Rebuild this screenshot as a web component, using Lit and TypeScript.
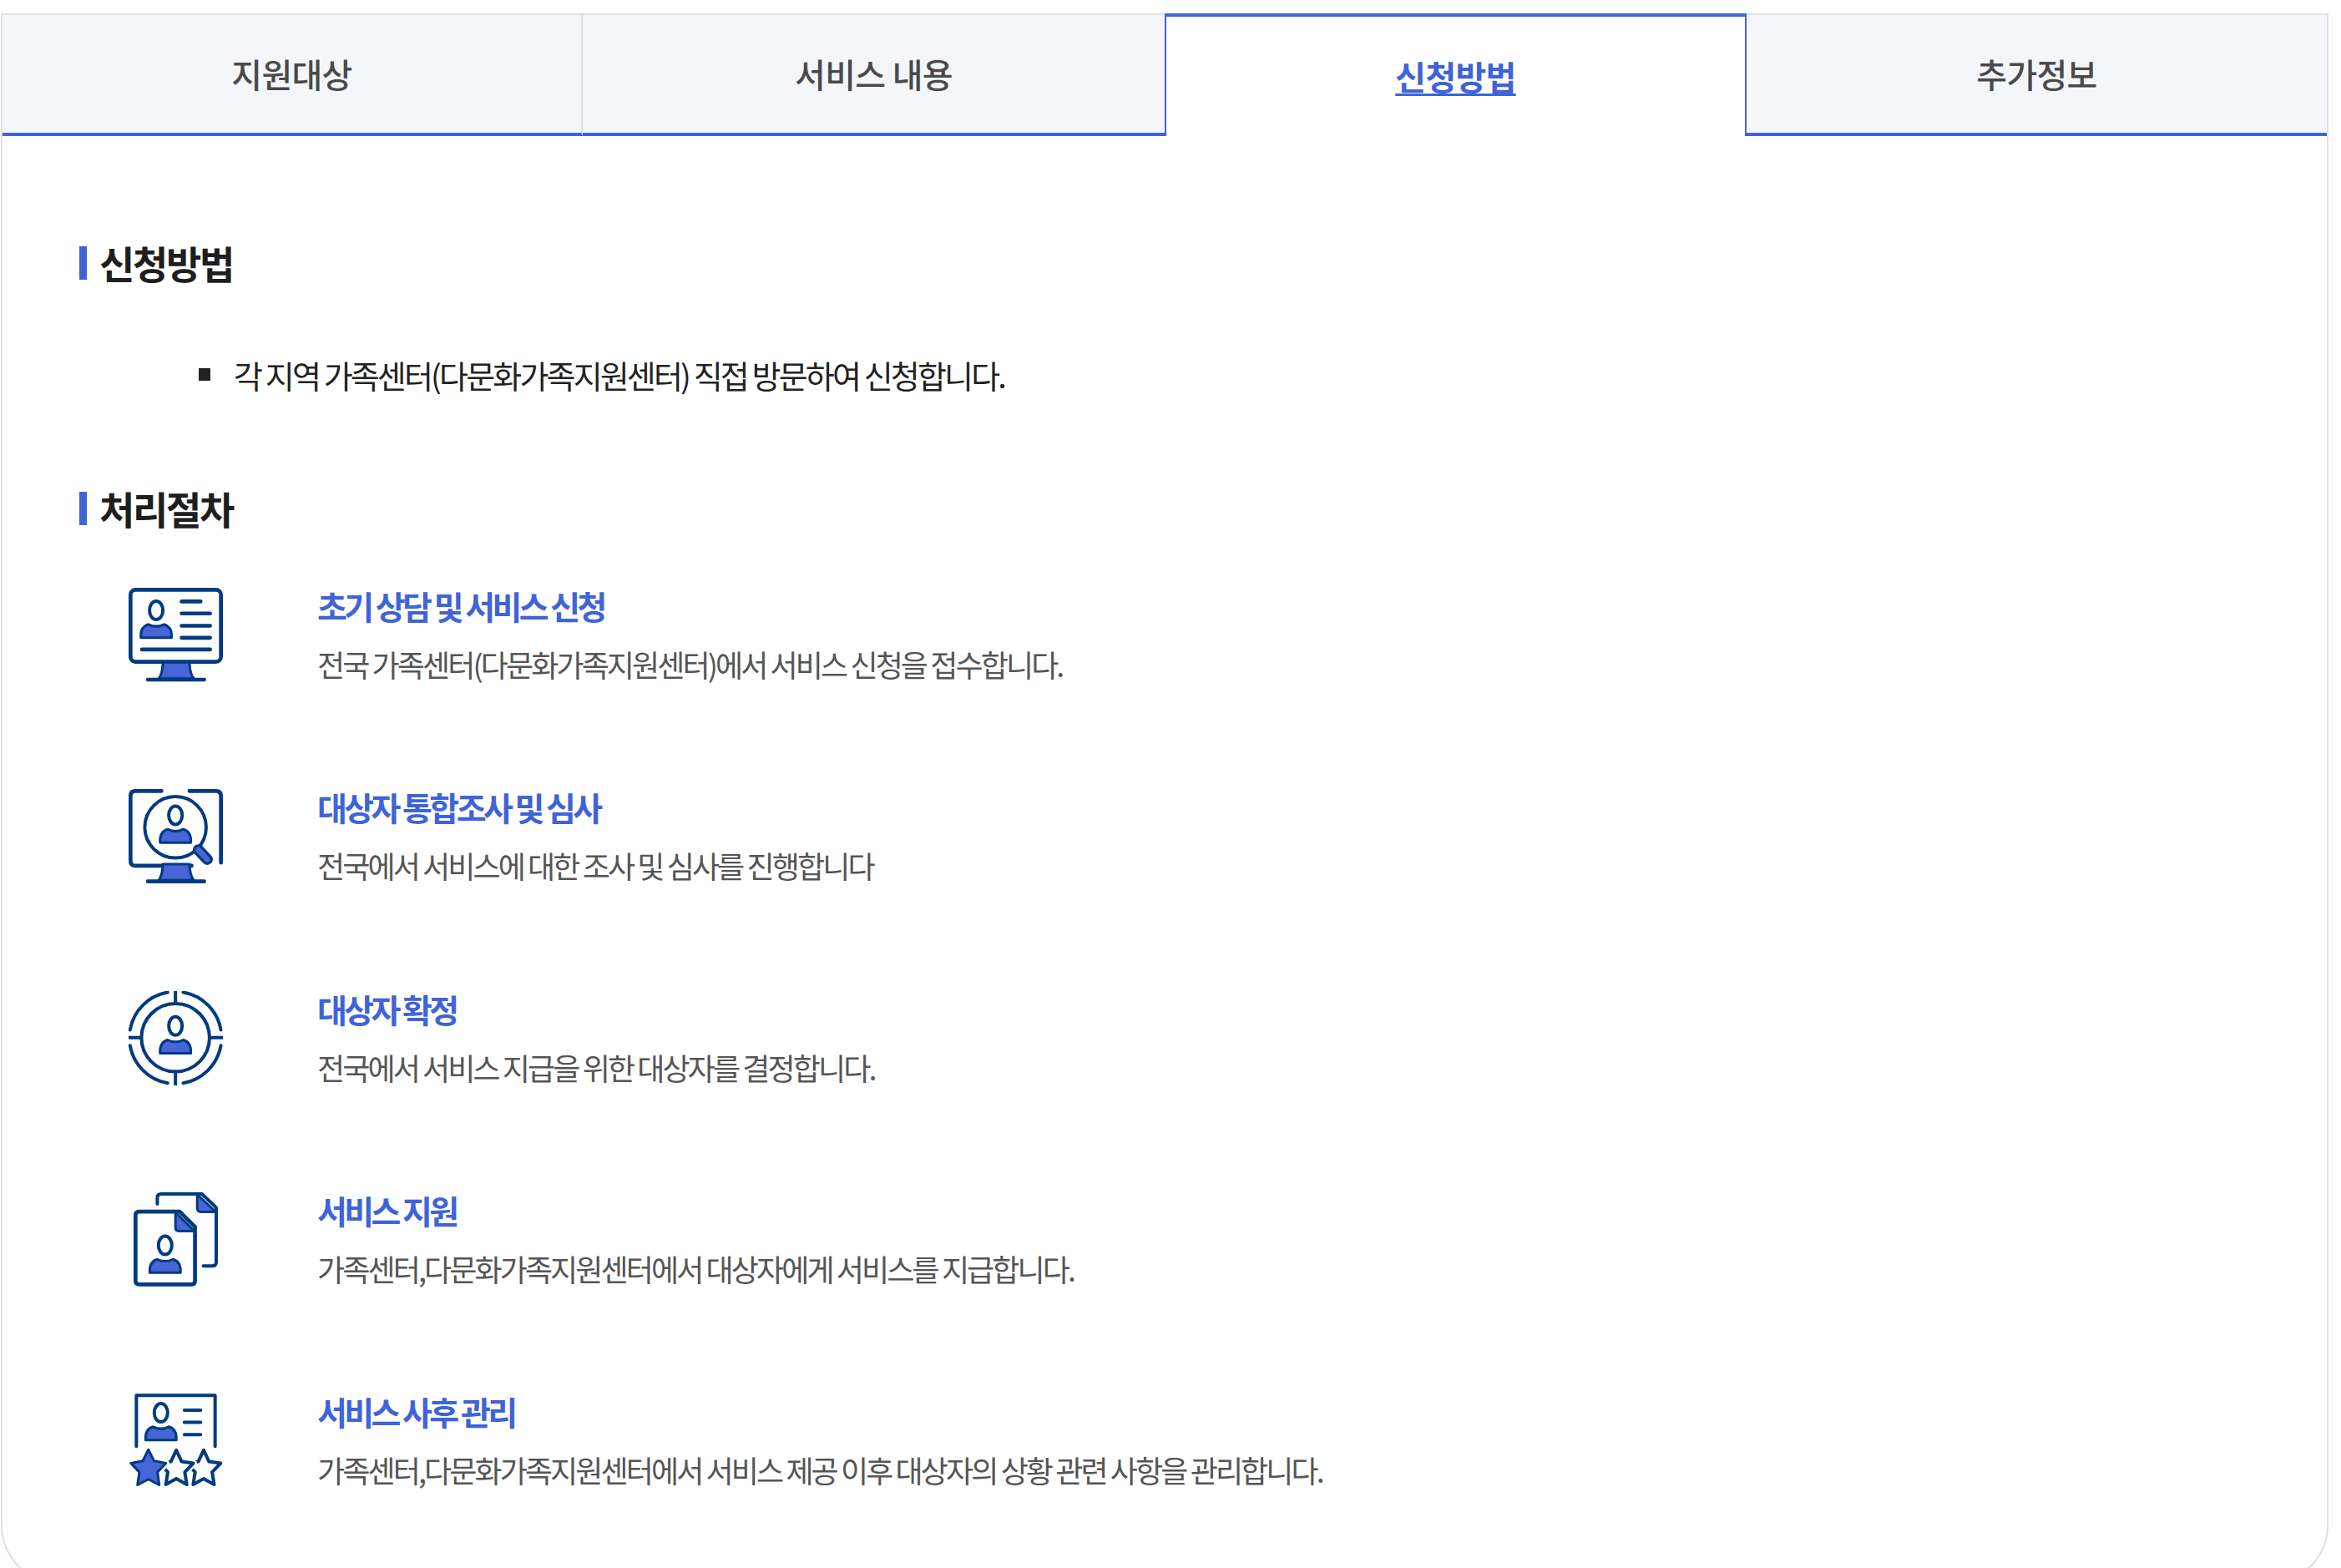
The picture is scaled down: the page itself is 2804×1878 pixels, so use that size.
import { LitElement, html, css, svg } from "lit";
import { customElement } from "lit/decorators.js";

const star = (cx: number, cy: number, Rx: number, Ry: number, k: number) => {
  const pts: string[] = [];
  for (let i = 0; i < 10; i++) {
    const a = -Math.PI / 2 + (i * Math.PI) / 5;
    const q = i % 2 ? k : 1;
    pts.push(`${(cx + Rx * q * Math.cos(a)).toFixed(1)},${(cy + Ry * q * Math.sin(a)).toFixed(1)}`);
  }
  return pts.join(" ");
};

const person = (cx: number, top: number) => svg`
  <ellipse class="thin" cx=${cx} cy=${top + 36} rx="24" ry="33"></ellipse>
  <path class="fill" d="M${cx - 55} ${top + 134} Q${cx - 58} ${top + 95} ${cx - 28} ${top + 86} Q${cx} ${top + 100} ${cx + 28} ${top + 86} Q${cx + 58} ${top + 95} ${cx + 55} ${top + 134} Z"></path>`;

const stand = (y: number) => svg`
  <path class="fill" d="M195 ${y} H290 Q292 ${y + 44} 306 ${y + 58} H180 Q193 ${y + 44} 195 ${y} Z"></path>
  <path class="line" d="M141 ${y + 62} H343"></path>`;

const icons = [
  svg`<svg viewBox="72 75 338 338">
    <rect class="line" x="79" y="82" width="324" height="258" rx="18"></rect>
    ${stand(342)}
    ${person(171, 120)}
    <path class="line" d="M262 124 H330 M262 167 H364 M262 211 H364 M262 254 H364 M120 296 H364"></path>
  </svg>`,
  svg`<svg viewBox="72 798 338 338">
    <path class="line" d="M190 805 H97 Q79 805 79 823 V1055 Q79 1073 97 1073 H298 M290 805 H385 Q403 805 403 823 V1062" stroke-linecap="butt"></path>
    <circle class="thin" cx="240" cy="935" r="110"></circle>
    <path class="line" d="M322 1016 L354 1050" style="stroke-width:40"></path>
    <path d="M322 1016 L354 1050" fill="none" stroke="#4764d8" stroke-width="20" stroke-linecap="round"></path>
    ${person(240, 856)}
    ${stand(1067)}
  </svg>`,
  svg`<svg viewBox="72 85 338 338">
    <circle class="thin" cx="240" cy="252" r="122"></circle>
    <path class="thin" d="M240 85 V130 M240 374 V420 M72 252 H118 M362 252 H410"></path>
    <path class="thin" d="M268 89.4 A165 165 0 0 1 402.6 224 M402.6 280 A165 165 0 0 1 268 414.6 M212 414.6 A165 165 0 0 1 77.4 280 M77.4 224 A165 165 0 0 1 212 89.4"></path>
    ${person(240, 174)}
  </svg>`,
  svg`<svg viewBox="72 58 338 338">
    <path class="line" style="stroke-width:12" d="M175 100 V78 Q175 64 189 64 H335 L386 113 V308 Q386 322 372 322 H340"></path>
    <path class="fill" d="M318 66 V114 Q318 128 332 128 H384 Z"></path>
    <path class="line" d="M255 127 H110 Q97 127 97 140 V376 Q97 388 110 388 H298 Q310 388 310 376 V182 Z"></path>
    <path class="fill" d="M240 130 V184 Q240 197 253 197 H308 Z"></path>
    ${person(203, 212)}
  </svg>`,
  svg`<svg viewBox="72 783 338 338">
    <path class="line" style="stroke-width:12" d="M100 972 V790 H382 V972"></path>
    ${person(188, 816)}
    <path class="line" style="stroke-width:12" d="M272 843 H330 M272 886 H330 M272 930 H330"></path>
    <polygon class="thin" points=${star(341, 1054, 64, 68, 0.5)}></polygon>
    <polygon class="halo" points=${star(243, 1054, 64, 68, 0.5)}></polygon>
    <polygon class="thin" points=${star(243, 1054, 64, 68, 0.5)}></polygon>
    <polygon class="halo" points=${star(143, 1054, 66, 70, 0.52)}></polygon>
    <polygon class="fill" stroke-width="13" points=${star(143, 1054, 66, 70, 0.52)}></polygon>
  </svg>`,
];

const steps = [
  ["초기 상담 및 서비스 신청", "전국 가족센터(다문화가족지원센터)에서 서비스 신청을 접수합니다."],
  ["대상자 통합조사 및 심사", "전국에서 서비스에 대한 조사 및 심사를 진행합니다"],
  ["대상자 확정", "전국에서 서비스 지급을 위한 대상자를 결정합니다."],
  ["서비스 지원", "가족센터,다문화가족지원센터에서 대상자에게 서비스를 지급합니다."],
  ["서비스 사후 관리", "가족센터,다문화가족지원센터에서 서비스 제공 이후 대상자의 상황 관련 사항을 관리합니다."],
];

const tabs = ["지원대상", "서비스 내용", "신청방법", "추가정보"];

@customElement("app-root")
export class AppRoot extends LitElement {
  static styles = css`
    :host {
      display: block;
      height: 1878px;
      overflow: hidden;
      padding: 16px 15px 0 1px;
      box-sizing: border-box;
      background: #fff;
      font-family: "Noto Sans CJK KR", "Noto Sans", sans-serif;
    }
    .panel {
      height: 1881px;
      box-sizing: border-box;
      border: 2px solid #e0e0e0;
      border-top: 0;
      border-radius: 0 0 70px 70px;
    }
    .tabs {
      display: grid;
      grid-template-columns: 695px 697px 697px 1fr;
      height: 147px;
    }
    .tab {
      display: flex;
      align-items: center;
      justify-content: center;
      box-sizing: border-box;
      padding-bottom: 2px;
      background: #f5f6fa;
      border-top: 2px solid #e0e0e0;
      border-right: 2px solid #dcdde2;
      border-bottom: 4px solid #3f63d9;
      font-size: 40px;
      font-weight: 500;
      letter-spacing: -0.7px;
      color: #4a4a4a;
    }
    .tab:nth-child(2), .tab:last-child {
      border-right: 0;
    }
    .tab.active {
      background: #fff;
      border: 2px solid #3f63d9;
      border-top-width: 4px;
      border-bottom: 0;
      color: #3f63d9;
      font-weight: 700;
      text-decoration: underline;
      text-decoration-thickness: 3px;
      text-underline-offset: 4px;
    }
    .body {
      padding: 132px 0 0 92px;
    }
    h2 {
      display: flex;
      align-items: center;
      gap: 15px;
      margin: 0;
      height: 40px;
      font-size: 46px;
      font-weight: 700;
      letter-spacing: -2.3px;
      color: #1e1e1e;
    }
    h2::before {
      content: "";
      width: 9px;
      height: 40px;
      background: #3f63d9;
    }
    h2 span {
      margin-top: -3px;
    }
    .note {
      display: flex;
      align-items: center;
      gap: 28px;
      margin: 93px 0 0 143px;
      height: 40px;
      font-size: 38px;
      letter-spacing: -2.85px;
      color: #222;
    }
    .note::before {
      content: "";
      width: 14px;
      height: 15px;
      background: #222;
    }
    .second {
      margin-top: 121px;
    }
    .steps {
      margin: 75px 0 0 59px;
    }
    .step {
      display: flex;
      gap: 113px;
      height: 241.25px;
    }
    .icon {
      width: 113px;
      height: 113px;
      flex: none;
    }
    .icon svg {
      display: block;
      width: 100%;
      height: 100%;
    }
    .title {
      margin-top: 1px;
      font-size: 39px;
      line-height: 40px;
      font-weight: 700;
      letter-spacing: -3.6px;
      color: #3f63d9;
    }
    .desc {
      margin-top: 30px;
      font-size: 36px;
      line-height: 40px;
      letter-spacing: -2.9px;
      color: #555;
    }
    .thin, .line, .fill, .halo {
      stroke: #003a80;
      stroke-linecap: round;
      stroke-linejoin: round;
    }
    .thin { fill: none; stroke-width: 12; }
    .line { fill: none; stroke-width: 14; }
    .fill { fill: #4764d8; stroke-width: 9; }
    .halo { fill: #fff; stroke: #fff; stroke-width: 26; }
  `;

  render() {
    return html`<div class="panel">
      <div class="tabs">
        ${tabs.map((t, i) => html`<div class="tab ${i === 2 ? "active" : ""}">${t}</div>`)}
      </div>
      <div class="body">
        <h2><span>신청방법</span></h2>
        <div class="note">각 지역 가족센터(다문화가족지원센터) 직접 방문하여 신청합니다.</div>
        <h2 class="second"><span>처리절차</span></h2>
        <div class="steps">
          ${steps.map(
            ([t, d], i) => html`<div class="step">
              <div class="icon">${icons[i]}</div>
              <div>
                <div class="title">${t}</div>
                <div class="desc">${d}</div>
              </div>
            </div>`
          )}
        </div>
      </div>
    </div>`;
  }
}
